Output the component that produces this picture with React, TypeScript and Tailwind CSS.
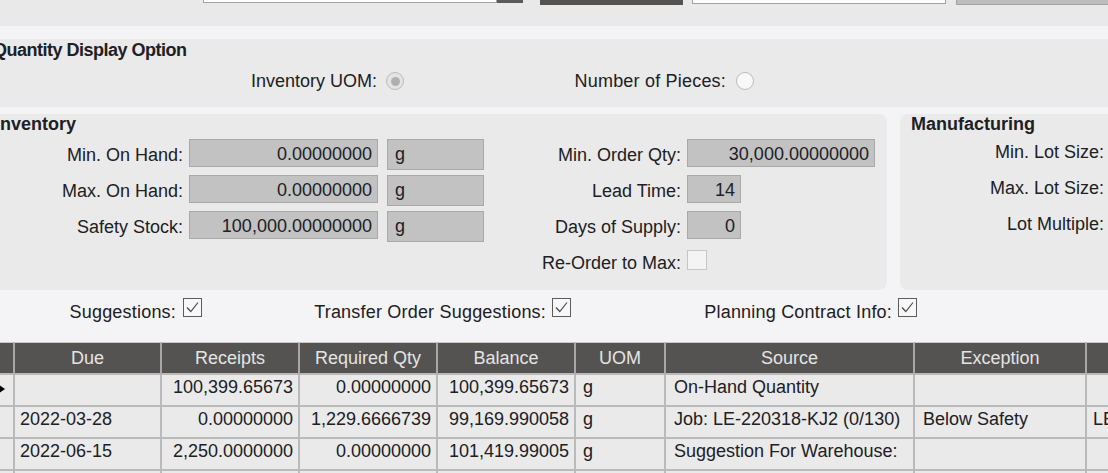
import React from "react";

function Radio({ checked }: { checked?: boolean }) {
  return (
    <div
      className={`flex h-[18px] w-[18px] shrink-0 items-center justify-center rounded-full border border-[#bcbcbc] ${
        checked ? "bg-[#e4e4e4]" : "bg-[#f8f8f8]"
      }`}
    >
      {checked && <div className="h-[9px] w-[9px] rounded-full bg-[#b0b0b0]" />}
    </div>
  );
}

function Check() {
  return (
    <div className="h-[19px] w-[19px] shrink-0 border border-[#5c5c5c] bg-[#f7f7f7]">
      <svg viewBox="0 0 17 17" className="h-[17px] w-[17px]">
        <polyline points="3,8.5 6.8,12.5 14,3.5" fill="none" stroke="#4a4a4a" strokeWidth="1.2" />
      </svg>
    </div>
  );
}

function Field({ value, width }: { value: string; width: string }) {
  return (
    <div
      className={`ml-[6px] h-[28px] shrink-0 border border-[#a9a9a9] bg-[#c2c2c2] pr-[5px] text-right leading-[28px] ${width}`}
    >
      {value}
    </div>
  );
}

function Unit() {
  return (
    <div className="ml-[9px] h-[31px] w-[97px] shrink-0 border border-[#a9a9a9] bg-[#c2c2c2] pl-[7px] leading-[28px]">
      g
    </div>
  );
}

const cols = "grid w-[1250px] grid-cols-[15px_147px_138px_138px_138px_90px_249px_172px_163px]";
const headers = ["", "Due", "Receipts", "Required Qty", "Balance", "UOM", "Source", "Exception", ""];
const right = [false, false, true, true, true, false, false, false, false];
const pads = ["", "pl-[5px]", "pr-[5px]", "pr-[5px]", "pr-[5px]", "pl-[7px]", "pl-[8px]", "pl-[8px]", "pl-[6px]"];

const rows = [
  ["", "", "100,399.65673", "0.00000000", "100,399.65673", "g", "On-Hand Quantity", "", ""],
  ["", "2022-03-28", "0.00000000", "1,229.6666739", "99,169.990058", "g", "Job: LE-220318-KJ2 (0/130)", "Below Safety", "LE-220318-KJ2"],
  ["", "2022-06-15", "2,250.0000000", "0.00000000", "101,419.99005", "g", "Suggestion For Warehouse:", "", ""],
  ["", "", "", "", "", "", "", "", ""],
];

export default function App() {
  return (
    <div className="h-[473px] w-[1108px] overflow-hidden bg-[#f4f4f6] font-['Liberation_Sans',Arial,sans-serif] text-[18px] text-[#202024]">
      {/* top toolbar, cut off */}
      <div className="flex h-[26px] items-start bg-[#e9e9e9]">
        <div className="ml-[203px] h-[3px] w-[294px] shrink-0 border-x border-b border-[#a3a3a3] bg-white" />
        <div className="h-[3px] w-[26px] shrink-0 bg-[#5a5a5a]" />
        <div className="ml-[17px] h-[5px] w-[143px] shrink-0 bg-[#555351]" />
        <div className="ml-[9px] h-[4px] w-[254px] shrink-0 border-x border-b border-[#a3a3a3] bg-white" />
        <div className="ml-[10px] h-[5px] w-[160px] shrink-0 border-b border-l border-[#a3a3a3] bg-[#bdbdbd]" />
      </div>

      {/* quantity display option */}
      <div className="mt-[13px] h-[68px] bg-[#eaeaea] pt-px">
        <div className="-ml-[7px] font-bold leading-[20px] tracking-[-0.5px]">Quantity Display Option</div>
        <div className="mt-[12px] flex h-[18px] items-center">
          <div className="flex w-[404px] shrink-0 items-center justify-end gap-[9px]">
            <span className="leading-[20px]">Inventory UOM:</span>
            <Radio checked />
          </div>
          <div className="flex w-[350px] shrink-0 items-center justify-end gap-[10px]">
            <span className="leading-[20px] tracking-[0.2px]">Number of Pieces:</span>
            <Radio />
          </div>
        </div>
      </div>

      {/* inventory + manufacturing */}
      <div className="mt-[7px] flex h-[176px]">
        <div className="h-[176px] w-[887px] shrink-0 rounded-r-[8px] bg-[#eaeaea]">
          <div className="-ml-[5px] font-bold leading-[20px]">Inventory</div>
          <div className="mt-[5px] flex">
            <div className="flex w-[484px] shrink-0 flex-col gap-[8px]">
              {[
                ["Min. On Hand:", "0.00000000"],
                ["Max. On Hand:", "0.00000000"],
                ["Safety Stock:", "100,000.00000000"],
              ].map(([label, value]) => (
                <div key={label} className="flex h-[28px] items-start">
                  <div className="w-[183px] shrink-0 pt-px text-right leading-[30px]">{label}</div>
                  <Field value={value} width="w-[189px]" />
                  <Unit />
                </div>
              ))}
            </div>
            <div className="flex flex-col gap-[8px]">
              <div className="flex h-[28px] items-start">
                <div className="w-[197px] shrink-0 pt-px text-right leading-[30px]">Min. Order Qty:</div>
                <Field value="30,000.00000000" width="w-[188px]" />
              </div>
              <div className="flex h-[28px] items-start">
                <div className="w-[197px] shrink-0 pt-px text-right leading-[30px]">Lead Time:</div>
                <Field value="14" width="w-[54px]" />
              </div>
              <div className="flex h-[28px] items-start">
                <div className="w-[197px] shrink-0 pt-px text-right leading-[30px]">Days of Supply:</div>
                <Field value="0" width="w-[54px]" />
              </div>
              <div className="flex h-[28px] items-start">
                <div className="w-[197px] shrink-0 pt-px text-right leading-[30px]">Re-Order to Max:</div>
                <div className="ml-[6px] mt-[3px] h-[20px] w-[20px] shrink-0 border border-[#c6c6c6] bg-[#f4f4f4]" />
              </div>
            </div>
          </div>
        </div>

        <div className="ml-[13px] h-[176px] w-[230px] shrink-0 rounded-l-[8px] bg-[#eaeaea] pl-[11px]">
          <div className="font-bold leading-[20px]">Manufacturing</div>
          <div className="mt-[3px] flex w-[193px] flex-col gap-[8px]">
            {["Min. Lot Size:", "Max. Lot Size:", "Lot Multiple:"].map((label) => (
              <div key={label} className="h-[28px] whitespace-nowrap text-right leading-[30px]">
                {label}
              </div>
            ))}
          </div>
        </div>
      </div>

      {/* checkbox options */}
      <div className="flex h-[52px] items-start pt-[8px]">
        <div className="flex w-[202px] shrink-0 items-start justify-end gap-[7px]">
          <span className="mt-[4px] leading-[20px] tracking-[0.2px]">Suggestions:</span>
          <Check />
        </div>
        <div className="flex w-[369px] shrink-0 items-start justify-end gap-[6px]">
          <span className="mt-[4px] leading-[20px] tracking-[0.2px]">Transfer Order Suggestions:</span>
          <Check />
        </div>
        <div className="flex w-[346px] shrink-0 items-start justify-end gap-[6px]">
          <span className="mt-[4px] leading-[20px] tracking-[0.2px]">Planning Contract Info:</span>
          <Check />
        </div>
      </div>

      {/* grid */}
      <div className={cols}>
        {headers.map((h, i) => (
          <div
            key={"h" + i}
            className="h-[33px] border-b-2 border-r-2 border-t border-b-[#b9b9b9] border-r-[#a7a7a7] border-t-[#c9c9c9] bg-[#555351] text-center leading-[30px] text-[#e4e4e4]"
          >
            {h}
          </div>
        ))}
        {rows.map((row, r) =>
          row.map((cell, c) => (
            <div
              key={r + "-" + c}
              className={`h-[32px] overflow-hidden whitespace-nowrap border-b-2 border-r-2 border-[#bababa] bg-[#eaeaea] pt-[2px] leading-[20px] ${
                right[c] ? "text-right" : "text-left"
              } ${pads[c]}`}
            >
              {c === 0 && r === 0 ? (
                <svg viewBox="0 0 8 10" className="-ml-[2px] mt-[7px] h-[10px] w-[8px]">
                  <polygon points="0,0 7,5 0,10" fill="#000" />
                </svg>
              ) : (
                cell
              )}
            </div>
          ))
        )}
      </div>
    </div>
  );
}
